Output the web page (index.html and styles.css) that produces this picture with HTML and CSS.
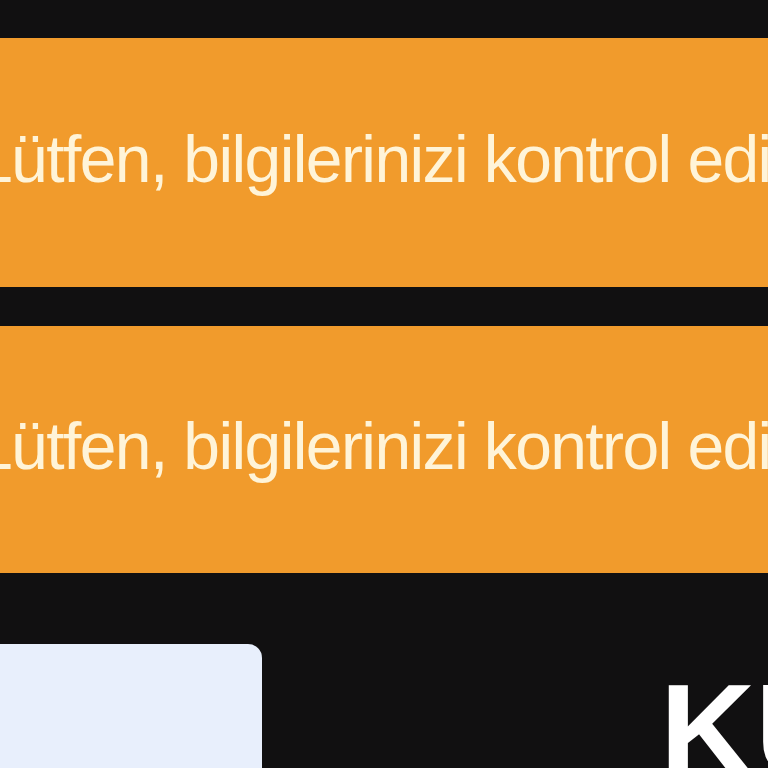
FILE: index.html
```
<!DOCTYPE html>
<html lang="tr">
<head>
<meta charset="utf-8">
<link rel="stylesheet" href="styles.css">
</head>
<body>
<div class="page">
  <div class="alert"><span class="alert-text">Lütfen, bilgilerinizi kontrol ediniz.</span></div>
  <div class="alert alert-second"><span class="alert-text">Lütfen, bilgilerinizi kontrol ediniz.</span></div>
  <div class="bottom">
    <div class="card"></div>
    <h1 class="title">KULLANICI</h1>
  </div>
</div>
</body>
</html>
```
FILE: styles.css
```
html, body {
  margin: 0;
  padding: 0;
  background: #111011;
  overflow: hidden;
}
.page {
  width: 768px;
  height: 768px;
  overflow: hidden;
  padding-top: 38px;
  box-sizing: border-box;
  font-family: "Liberation Sans", Arial, sans-serif;
}
.alert {
  height: 249px;
  box-sizing: border-box;
  padding-bottom: 7px;
  background: #f19b2c;
  display: flex;
  align-items: center;
  white-space: nowrap;
  overflow: hidden;
}
.alert-second {
  margin-top: 39px;
  height: 247px;
}
.alert-text {
  margin-left: -24px;
  font-size: 66px;
  letter-spacing: -1.6px;
  color: #fff4d8;
  line-height: 1;
}
.bottom {
  margin-top: 71px;
  display: flex;
  align-items: flex-start;
  white-space: nowrap;
}
.card {
  width: 262px;
  height: 200px;
  background: #e8effc;
  border-top-right-radius: 14px;
  flex: none;
}
.title {
  margin: 21px 0 0 398px;
  font-size: 132px;
  font-weight: bold;
  color: #ffffff;
  line-height: 1;
}
```
